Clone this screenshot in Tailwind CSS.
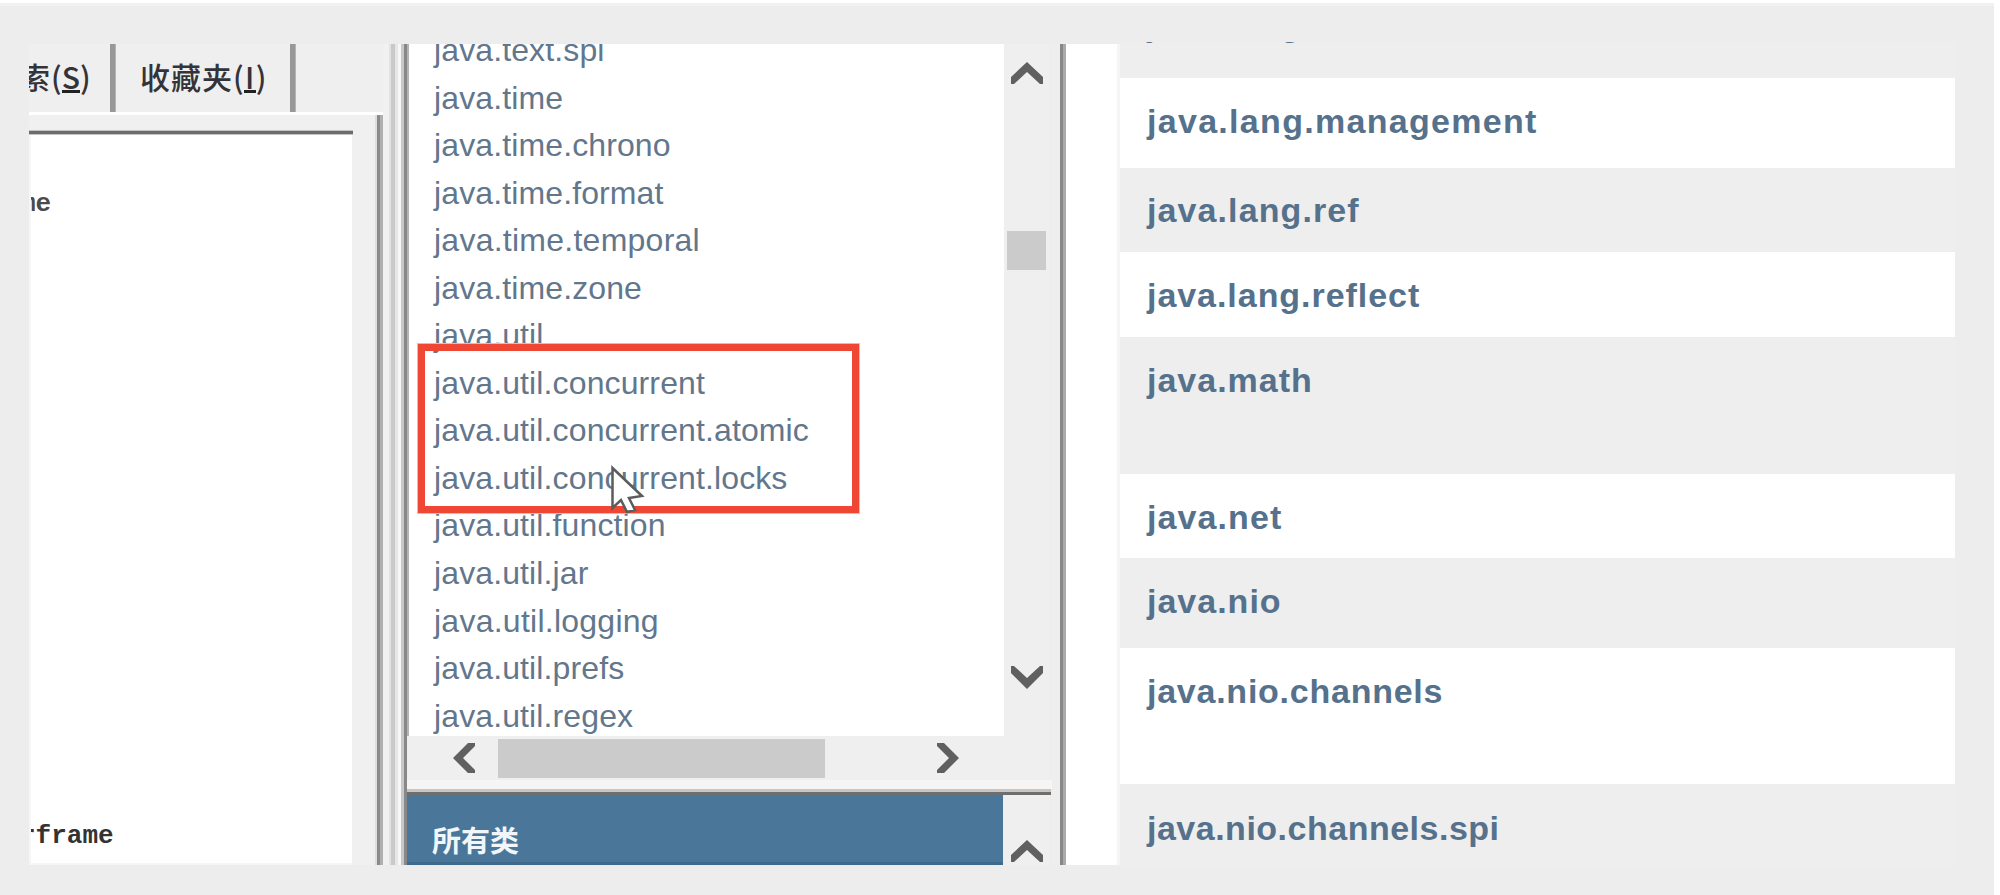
<!DOCTYPE html>
<html lang="zh">
<head>
<meta charset="utf-8">
<title>Java API</title>
<script src="https://cdn.jsdelivr.net/npm/@tailwindcss/browser@4"></script>
</head>
<body class="w-[2000px] h-[895px] overflow-hidden bg-white pt-[3px] font-['Liberation_Sans','Noto_Sans_CJK_SC',sans-serif]">
<div class="relative w-[1994px] h-[892px] bg-[#ededed] border-t-3 border-[#f2f2f2] pt-[38px] pl-[29px] flex">

  <!-- navigation pane -->
  <div class="w-[372px] h-[821px] flex">
    <div class="w-[354px] flex flex-col">
      <div class="h-[68px] shrink-0 flex bg-[#efefef] overflow-hidden font-['Noto_Sans_CJK_SC',sans-serif] font-medium text-[30px] leading-[34px] text-[#333338]">
        <div class="w-[81px] shrink-0 overflow-hidden pt-[15px] whitespace-nowrap"><span class="-ml-[9px] inline-block">索</span><span class="inline-block ml-[1px]">(<span class="inline-block h-[34px] border-b-3 border-[#222]">S</span>)</span></div>
        <div class="w-[6px] shrink-0 bg-[#989898] border-r border-[#b4b4b4]"></div>
        <div class="w-[174px] shrink-0 pt-[15px] pl-[24px] whitespace-nowrap"><span class="tracking-[1px]">收藏夹</span>(<span class="inline-block h-[34px] w-[12px] text-center border-b-3 border-[#222]">I</span>)</div>
        <div class="w-[6px] shrink-0 bg-[#989898] border-r border-[#b4b4b4]"></div>
      </div>
      <div class="grow flex border-t-3 border-white">
        <div class="w-[346px] pt-[15px] bg-[#f0f0f0] flex flex-col">
          <div class="h-[5px] w-[324px] bg-[#6c6c6c] border-t-1 border-b-1 border-[#c4c4c4]"></div>
          <div class="w-[323px] grow bg-white overflow-hidden border-l-2 border-b-2 border-[#f6f6f6] font-['Liberation_Mono',monospace] font-bold text-[26px] leading-[30px] text-[#4a4a4a] flex flex-col justify-between pt-[54px] pb-[12px]">
            <div class="-ml-[11px]">me</div>
            <div class="-ml-[11px] text-[#333]">rframe</div>
          </div>
        </div>
        <div class="w-[2px] bg-[#ddd]"></div>
        <div class="w-[3px] bg-[#8a8a8a]"></div>
        <div class="w-[3px] bg-[#b0b0b0]"></div>
      </div>
    </div>
    <div class="w-[6px] bg-[#f1f1f1]"></div>
    <div class="w-[2px] bg-[#e2e2e2]"></div>
    <div class="w-[4px] bg-[#c9c9c9]"></div>
    <div class="w-[3px] bg-[#e6e6e6]"></div>
    <div class="w-[3px] bg-[#f7f7f7]"></div>
  </div>

  <!-- package frame and class frame -->
  <div class="w-[651px] h-[821px] flex">
    <div class="w-[3px] bg-[#c8c8c8]"></div>
    <div class="w-[3px] bg-[#888]"></div>
    <div class="w-[645px] flex flex-col">
      <div class="h-[692px] flex">
        <div class="w-[597px] border-l-2 border-[#b4b4b4] bg-white overflow-hidden">
          <div class="-mt-[17px] pl-[25px] text-[32px] leading-[47.55px] tracking-[0.12px] text-[#62768c] whitespace-nowrap">
            <div>java.text.spi</div>
            <div>java.time</div>
            <div>java.time.chrono</div>
            <div>java.time.format</div>
            <div class="tracking-[0.25px]">java.time.temporal</div>
            <div>java.time.zone</div>
            <div>java.util</div>
            <div>java.util.concurrent</div>
            <div>java.util.concurrent.atomic</div>
            <div>java.util.concurrent.locks</div>
            <div>java.util.function</div>
            <div>java.util.jar</div>
            <div class="tracking-[0.25px]">java.util.logging</div>
            <div>java.util.prefs</div>
            <div>java.util.regex</div>
          </div>
        </div>
        <div class="w-[45px] bg-[#efefef] flex flex-col items-center pt-[17px]">
          <svg class="w-[34px] h-[24px]" viewBox="0 0 34 24"><path d="M1 16L17 1L33 16V23H30L17 11L4 23H1Z" fill="#606060"/></svg>
          <div class="mt-[146px] w-[39px] h-[39px] bg-[#cbcbcb]"></div>
          <svg class="mt-[395px] w-[34px] h-[25px]" viewBox="0 0 34 25"><path d="M1 1H4L17 13L30 1H33V8L17 24L1 8Z" fill="#606060"/></svg>
        </div>
      </div>
      <div class="h-[44px] w-[642px] bg-[#efefef] pl-[45px] flex items-center">
        <svg class="w-[25px] h-[30px]" viewBox="0 0 25 30"><path d="M16 0H23V3L11 15L23 27V30H16L1 15Z" fill="#606060"/></svg>
        <div class="ml-[21px] w-[327px] h-[39px] bg-[#cbcbcb]"></div>
        <svg class="ml-[110px] w-[25px] h-[30px]" viewBox="0 0 25 30"><path d="M9 0H2V3L14 15L2 27V30H9L24 15Z" fill="#606060"/></svg>
      </div>
      <div class="h-[9px] bg-[#f7f5f4]"></div>
      <div class="h-[3px] w-[644px] bg-[#c8c6c4]"></div>
      <div class="h-[3px] w-[644px] bg-[#6e6e6e]"></div>
      <div class="grow flex overflow-hidden">
        <div class="w-[596px] bg-[#4a7799] border-b-3 border-[#3f6a8b] pl-[25px] pt-[24px] text-[29px] leading-[40px] font-bold text-[#f0f6fa] font-['Noto_Sans_CJK_SC',sans-serif]">所有类</div>
        <div class="w-[46px] ml-[1px] bg-[#efefef] flex justify-center pt-[44px]"><svg class="w-[34px] h-[24px]" viewBox="0 0 34 24"><path d="M1 16L17 1L33 16V23H30L17 11L4 23H1Z" fill="#606060"/></svg></div>
      </div>
    </div>
  </div>

  <div class="w-[8px] bg-[#eee] h-[821px]"></div>
  <div class="w-[3px] bg-[#888] h-[821px]"></div>
  <div class="w-[3px] bg-[#aaa] h-[821px]"></div>
  <div class="w-[51px] bg-white h-[821px]"></div>

  <!-- package summary table -->
  <div class="w-[3px] h-[821px] bg-[#f5f5f5]"></div>
  <div class="w-[835px] h-[824px] -mt-[2px] flex flex-col overflow-hidden bg-[#eeeeee] text-[34px] leading-[40px] font-bold text-[#56718c] whitespace-nowrap">
    <div class="h-[36px] shrink-0 pl-[27px]"><div class="-mt-[38px] tracking-[1px]">java.lang.instrument</div></div>
    <div class="h-[90px] shrink-0 bg-white pl-[27px] pt-[23px] tracking-[1.3px]">java.lang.management</div>
    <div class="h-[84px] shrink-0 pl-[27px] pt-[22px] tracking-[1.1px]">java.lang.ref</div>
    <div class="h-[85px] shrink-0 bg-white pl-[27px] pt-[23px] tracking-[0.95px]">java.lang.reflect</div>
    <div class="h-[137px] shrink-0 pl-[27px] pt-[23px] tracking-[1px]">java.math</div>
    <div class="h-[84px] shrink-0 bg-white pl-[27px] pt-[23px] tracking-[1.1px]">java.net</div>
    <div class="h-[90px] shrink-0 pl-[27px] pt-[23px] tracking-[1px]">java.nio</div>
    <div class="h-[136px] shrink-0 bg-white pl-[27px] pt-[23px] tracking-[0.75px]">java.nio.channels</div>
    <div class="grow pl-[27px] pt-[24px] tracking-[0.5px]">java.nio.channels.spi</div>
  </div>

  <!-- highlight and mouse pointer -->
  <div class="absolute left-[418px] top-[338px] w-[441px] h-[169px] border-7 border-[#f04634] outline-1 outline-[#ffb0a6]"></div>
  <svg class="absolute left-[608px] top-[456px] w-[40px] h-[56px]" viewBox="0 0 40 56"><path d="M4.500 6V46L13 38L19 50L27 48L21 36L34 34Z" fill="#fff" stroke="#5c5c5c" stroke-width="2.500"/></svg>
</div>
</body>
</html>
